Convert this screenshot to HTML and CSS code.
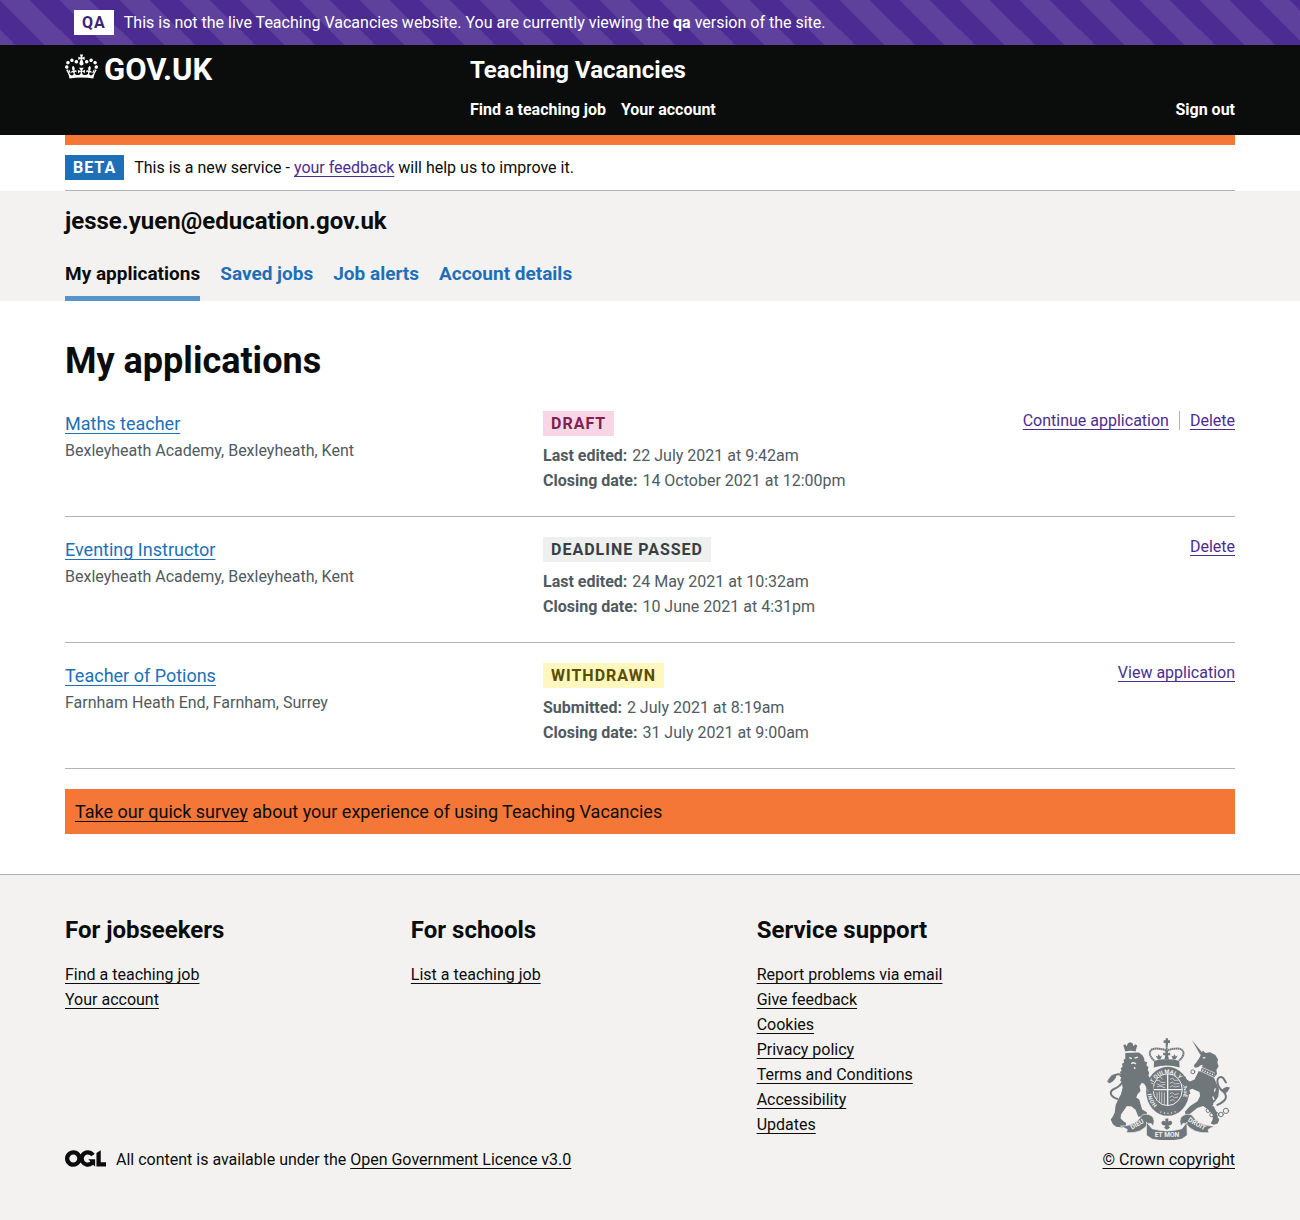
FILE: index.html
```html
<!DOCTYPE html>
<html lang="en">
<head>
<meta charset="utf-8">
<meta name="viewport" content="width=device-width, initial-scale=1">
<title>My applications - Teaching Vacancies - GOV.UK</title>
<link rel="stylesheet" href="styles.css">
</head>
<body>
<div class="env-banner">
  <div class="container env-banner__inner">
    <strong class="tag tag--env">QA</strong>
    <span>This is not the live Teaching Vacancies website. You are currently viewing the <b>qa</b> version of the site.</span>
  </div>
</div>

<header class="header">
  <div class="container header__inner">
    <div class="header__logo">
      <a href="#" class="logo">
        <svg class="logo__crown" viewBox="0 0 132 97" aria-hidden="true"><path fill="currentColor" d="M25 30.2c3.5 1.5 7.7-.2 9.1-3.7 1.5-3.6-.2-7.8-3.9-9.2-3.6-1.4-7.6.3-9.1 3.9-1.4 3.5.3 7.5 3.9 9zM9 39.5c3.6 1.5 7.8-.2 9.2-3.7 1.5-3.6-.2-7.8-3.9-9.1-3.6-1.5-7.6.2-9.1 3.8-1.4 3.5.3 7.5 3.8 9zM4.4 57.2c3.5 1.5 7.7-.2 9.1-3.8 1.5-3.6-.2-7.7-3.9-9.1-3.5-1.5-7.6.3-9.1 3.8-1.4 3.5.3 7.6 3.9 9.1zm38.3-21.4c3.5 1.5 7.7-.2 9.1-3.8 1.5-3.6-.2-7.7-3.9-9.1-3.6-1.5-7.6.3-9.1 3.8-1.3 3.6.4 7.7 3.9 9.1zm64.4-5.6c-3.6 1.5-7.8-.2-9.1-3.7-1.5-3.6.2-7.8 3.8-9.2 3.6-1.4 7.7.3 9.2 3.9 1.3 3.5-.4 7.5-3.9 9zm15.9 9.3c-3.6 1.5-7.7-.2-9.1-3.7-1.5-3.6.2-7.8 3.7-9.1 3.6-1.5 7.7.2 9.2 3.8 1.5 3.5-.3 7.5-3.8 9zm4.7 17.7c-3.6 1.5-7.8-.2-9.2-3.8-1.5-3.6.2-7.7 3.9-9.1 3.6-1.5 7.7.3 9.2 3.8 1.3 3.5-.4 7.6-3.9 9.1zM89.3 35.8c-3.6 1.5-7.8-.2-9.2-3.8-1.4-3.6.2-7.7 3.9-9.1 3.6-1.5 7.7.3 9.2 3.8 1.4 3.6-.3 7.7-3.9 9.1zM69.7 17.7l8.9 4.7V9.3l-8.9 2.8c-.2-.3-.5-.6-.9-.9L72.4 0H59.6l3.5 11.2c-.3.3-.6.5-.9.9l-8.8-2.8v13.1l8.8-4.7c.3.3.6.7.9.9l-5 15.4v.1c-.2.8-.4 1.6-.4 2.4 0 4.1 3.1 7.5 7 8.1h.2c.3 0 .7.1 1 .1.4 0 .7 0 1-.1h.2c4-.6 7.1-4.1 7.1-8.1 0-.8-.1-1.7-.4-2.4V34l-5.1-15.4c.4-.2.7-.6 1-.9zM66 92.8c16.9 0 32.8 1.1 47.1 3.2 4-16.9 8.9-26.7 14-33.5l-9.6-3.4c1 4.9 1.1 7.2 0 10.2-1.5-1.4-3-4.3-4.2-8.7L108.6 76c2.8-2 5-3.2 7.5-3.3-4.4 9.4-10 11.9-13.6 11.2-4.3-.8-6.3-4.6-5.6-7.9 1-4.7 5.7-5.9 8-.5 4.3-8.7-3-11.4-7.6-8.8 7.1-7.2 7.9-13.5 2.1-21.1-8 6.1-8.1 12.3-4.5 20.8-4.7-5.4-12.1-2.5-9.5 6.2 3.4-5.2 7.9-2 7.2 3.1-.6 4.3-6.4 7.8-13.5 7.2-10.3-.9-10.9-8-11.2-13.8 2.5-.5 7.1 1.8 11 7.3L80.2 60c-4.1 4.4-8 5.3-12.3 5.4 1.4-4.4 8-11.6 8-11.6H55.5s6.4 7.2 7.9 11.6c-4.2-.1-8-1-12.3-5.4l1.4 16.4c3.9-5.5 8.5-7.7 10.9-7.3-.3 5.8-.9 12.8-11.1 13.8-7.2.6-12.9-2.9-13.5-7.2-.7-5 3.8-8.3 7.1-3.1 2.7-8.7-4.6-11.6-9.4-6.2 3.7-8.5 3.6-14.7-4.6-20.8-5.8 7.6-5 13.9 2.2 21.1-4.7-2.6-11.9.1-7.7 8.8 2.3-5.5 7.1-4.2 8.1.5.7 3.3-1.3 7.1-5.7 7.9-3.5.7-9-1.8-13.5-11.2 2.5.1 4.7 1.3 7.5 3.3l-4.7-15.4c-1.2 4.4-2.7 7.2-4.3 8.7-1.1-3-.9-5.3 0-10.2l-9.5 3.4c5 6.9 9.9 16.7 14 33.5 14.8-2.1 30.8-3.2 47.7-3.2z"/></svg>
        <span>GOV.UK</span>
      </a>
    </div>
    <div class="header__content">
      <a href="#" class="header__title">Teaching Vacancies</a>
      <nav class="header__nav" aria-label="Main">
        <a href="#">Find a teaching job</a>
        <a href="#">Your account</a>
        <a href="#" class="header__signout">Sign out</a>
      </nav>
    </div>
  </div>
</header>

<div class="container">
  <div class="phase-banner">
    <strong class="tag tag--phase">BETA</strong>
    <span>This is a new service - <a href="#" class="link link--visited">your feedback</a> will help us to improve it.</span>
  </div>
</div>

<div class="account">
  <div class="container">
    <p class="account__email">jesse.yuen@education.gov.uk</p>
    <nav class="tabs" aria-label="Account">
      <a href="#" class="tabs__item tabs__item--current" aria-current="page">My applications</a>
      <a href="#" class="tabs__item">Saved jobs</a>
      <a href="#" class="tabs__item">Job alerts</a>
      <a href="#" class="tabs__item">Account details</a>
    </nav>
  </div>
</div>

<main class="container main">
  <h1 class="main__title">My applications</h1>

  <article class="application">
    <div>
      <a href="#" class="link application__title">Maths teacher</a>
      <p class="application__place">Bexleyheath Academy, Bexleyheath, Kent</p>
    </div>
    <div>
      <strong class="tag tag--pink">DRAFT</strong>
      <dl class="dates">
        <div><dt>Last edited:</dt><dd>22 July 2021 at 9:42am</dd></div>
        <div><dt>Closing date:</dt><dd>14 October 2021 at 12:00pm</dd></div>
      </dl>
    </div>
    <ul class="application__actions">
      <li><a href="#" class="link link--visited">Continue application</a></li>
      <li><a href="#" class="link link--visited">Delete</a></li>
    </ul>
  </article>

  <article class="application">
    <div>
      <a href="#" class="link application__title">Eventing Instructor</a>
      <p class="application__place">Bexleyheath Academy, Bexleyheath, Kent</p>
    </div>
    <div>
      <strong class="tag tag--grey">DEADLINE PASSED</strong>
      <dl class="dates">
        <div><dt>Last edited:</dt><dd>24 May 2021 at 10:32am</dd></div>
        <div><dt>Closing date:</dt><dd>10 June 2021 at 4:31pm</dd></div>
      </dl>
    </div>
    <ul class="application__actions">
      <li><a href="#" class="link link--visited">Delete</a></li>
    </ul>
  </article>

  <article class="application">
    <div>
      <a href="#" class="link application__title">Teacher of Potions</a>
      <p class="application__place">Farnham Heath End, Farnham, Surrey</p>
    </div>
    <div>
      <strong class="tag tag--yellow">WITHDRAWN</strong>
      <dl class="dates">
        <div><dt>Submitted:</dt><dd>2 July 2021 at 8:19am</dd></div>
        <div><dt>Closing date:</dt><dd>31 July 2021 at 9:00am</dd></div>
      </dl>
    </div>
    <ul class="application__actions">
      <li><a href="#" class="link link--visited">View application</a></li>
    </ul>
  </article>

  <p class="survey"><a href="#" class="link link--text">Take our quick survey</a> about your experience of using Teaching Vacancies</p>
</main>

<footer class="footer">
  <div class="container footer__inner">
    <div class="footer__main">
      <div class="footer__columns">
        <section>
          <h2 class="footer__heading">For jobseekers</h2>
          <ul class="footer__list">
            <li><a href="#" class="link link--text">Find a teaching job</a></li>
            <li><a href="#" class="link link--text">Your account</a></li>
          </ul>
        </section>
        <section>
          <h2 class="footer__heading">For schools</h2>
          <ul class="footer__list">
            <li><a href="#" class="link link--text">List a teaching job</a></li>
          </ul>
        </section>
        <section>
          <h2 class="footer__heading">Service support</h2>
          <ul class="footer__list">
            <li><a href="#" class="link link--text">Report problems via email</a></li>
            <li><a href="#" class="link link--text">Give feedback</a></li>
            <li><a href="#" class="link link--text">Cookies</a></li>
            <li><a href="#" class="link link--text">Privacy policy</a></li>
            <li><a href="#" class="link link--text">Terms and Conditions</a></li>
            <li><a href="#" class="link link--text">Accessibility</a></li>
            <li><a href="#" class="link link--text">Updates</a></li>
          </ul>
        </section>
      </div>
      <div class="licence">
        <svg class="licence__logo" viewBox="0 0 483.2 195.7" role="img" aria-label="Open Government Licence"><path fill="currentColor" d="M421.5 142.8V.1l-50.7 32.3v161.1h112.4v-50.7zm-122.3-9.6A47.12 47.12 0 0 1 221 97.8c0-26 21.1-47.1 47.1-47.1 16.7 0 31.4 8.7 39.7 21.8l42.7-27.2A97.63 97.63 0 0 0 268.1 0c-36.5 0-68.3 20.1-85.1 49.7A98 98 0 0 0 97.8 0C43.9 0 0 43.9 0 97.8s43.9 97.8 97.8 97.8c36.5 0 68.3-20.1 85.1-49.7a97.76 97.76 0 0 0 149.6 25.4l19.4 22.2h3v-87.8h-80l24.3 27.5zM97.8 145c-26 0-47.1-21.1-47.1-47.1s21.1-47.1 47.1-47.1 47.1 21.1 47.1 47.1S123.8 145 97.8 145"/></svg>
        <span>All content is available under the <a href="#" class="link link--text">Open Government Licence v3.0</a></span>
      </div>
    </div>
    <div class="crown-copyright">
      <svg class="crest" viewBox="50 38 377 308" aria-hidden="true">
        <!-- imperial crown -->
        <g fill="#6f777b">
          <path d="M230 39h7v6h6v8h-6v8h-7v-8h-6v-8h6z"/>
          <path d="M195 107q38-9 76 0l1 20q-39-12-78 0z"/>
          <path d="M207 103l-8-12 7 3 3-8 4 8 6-3-5 12zM226 103l3-12-7-2 1-7 6 2 4-8 4 8 6-2 1 7-7 2 3 12zM252 103l-5-12 6 3 4-8 3 8 7-3-8 12z"/>
        </g>
        <g fill="none" stroke="#6f777b" stroke-width="6" stroke-dasharray="5 1">
          <path d="M195 106C175 88 180 70 200 70c17 0 33 3 33 12 0-9 16-12 33-12 20 0 25 18 5 36"/>
          <path d="M233 60v24"/>
        </g>
        <!-- garter and quartered shield -->
        <ellipse cx="236" cy="199" rx="65" ry="74" fill="#6f777b"/>
        <ellipse cx="236" cy="194" rx="44" ry="48" fill="none" stroke="#f3f2f1" stroke-width="3"/>
        <g fill="none" stroke="#f3f2f1" stroke-width="2">
          <path d="M236 147v94M193 194h86" stroke-width="4"/>
          <path d="M202 166h9l4 6h14M203 176l10 5 16-3M204 186l8-3 16 5M214 156l7 7M243 163l8-4 5 7 14-1M242 175l9-4 7 6 14-2M243 186l8-4 8 4 13-3M243 206l8-3 6 6 13-3M242 217l8-4 7 6 10-3M243 228l9-4 5 4M204 202v20M211 200v30M218 200v35M226 202v35"/>
          <path d="M214 261q24 10 46-1" stroke-dasharray="3 8" stroke-width="4"/>
        </g>
        <path id="garter" d="M205 241A49 54 0 1 1 267 241" fill="none"/>
        <text class="crest__garter"><textPath href="#garter">HONI SOIT QUI MAL Y PENSE</textPath></text>
        <!-- lion -->
        <g fill="#6f777b">
          <path d="M108 79l-6-19 6-3 4 6 4-9 7-3 7 3 3 9 5-6 6 4-5 18q-15-5-31 0z"/>
          <path d="M108 83l41-1 11 8 5 9 1 9 8 3-2 9 6 6-2 9 4 7-2 9 5 9 2 12 8 12 1 14-6 6-9-4-8-14-6-10-7-3-7 11 3 14-9 10-4 10 9 6 5 16 4 14 14 8 1 10-4 5-23-2-8-20-12-10-14-2-8 12-10 14-1 12 9 9 7 4 0 9-10 5-20-2-10-8-6-14 6-8 6-12 3-24 8-18 8-14 5-20-3-18-5-4 4-9-5-3 5-6-5-7 6-4-3-8 6-4-2-9 6-3-1-9 5-3z"/>
        </g>
        <g fill="none" stroke="#6f777b" stroke-linecap="round">
          <path d="M84 222C62 214 58 200 74 192c28-12 34-34 22-42-12-6-22 0-20 8" stroke-width="6"/>
          <path d="M80 148c-14 0-18 8-26 22 4-2 5 0 4 4 8-2 20-8 22-26z" fill="#6f777b" stroke-width="2"/>
        </g>
        <!-- unicorn -->
        <g fill="#6f777b">
          <path d="M309 44l33 40-7 5z"/>
          <path d="M337 88l5-12 8 7 14-2 16 8 8 14-2 10 4 10-7 12 2 12-9 10-42-16 4-10 4-12-8 2-6 5-10 2-3-8 8-9 8-12z"/>
          <path d="M330 138l46 20 7 17 8 18-2 22-9 13-7 8 5 15 7 12 1 13 6 8-5 12-12 4-9-4 6-12 0-14-14-16-15-11-18 6-14 12-9 7 0 8-11-3-3-12 16-18 22-14 8-16-2-12-22-10-9 4 4 12-8 1-7-15 6-9-14-4-8-14 4-9 12-3 3 10 10 5 14-6z"/>
          <path d="M396 196c9-3 12-14 29-8-6 4-6 16-18 17z"/>
        </g>
        <g fill="none" stroke="#6f777b" stroke-linecap="round">
          <path d="M386 240c22-10 34-22 20-38-24-18-26-47-8-46 10 2 8 10 14 16" stroke-width="6"/>
          <g stroke-width="3"><circle cx="358" cy="257" r="6"/><circle cx="369" cy="270" r="6"/><circle cx="384" cy="269" r="6"/><circle cx="397" cy="269" r="7"/><circle cx="412" cy="258" r="8"/><circle cx="312" cy="140" r="6"/><circle cx="293" cy="170" r="5"/></g>
        </g>
        <g fill="none" stroke="#f3f2f1">
          <path d="M330 135l45 21M334 124l45 20" stroke-width="2"/>
          <path d="M333 131l45 20" stroke-width="4" stroke-dasharray="4 4"/>
          <path d="M342 98l8-1M120 97l8 3M136 99l10-3M126 116q8-7 14 1M135 126l3 5" stroke-width="4"/>
          <path d="M380 190l-3 10M372 215l4 10M378 238l-6 6" stroke-width="4"/>
        </g>
        <!-- motto ribbon -->
        <g fill="#6f777b" stroke="#f3f2f1" stroke-width="2">
          <path d="M94 304q42 2 66-34 20-6 32 8 6 10 0 26l-6-8-8 0q-22 32-66 28l2-10z"/>
          <path d="M378 304q-46 2-70-34-20-6-32 8-6 10 0 26l6-8 8 0q24 32 70 28l-2-10z"/>
          <path d="M172 292l17 20q45 13 90 0l15-20 1 40-16 11q-45 11-90 0l-17-11z"/>
        </g>
        <path d="M229 281h9v10q8-7 12 2-2 10-12 9l5 7-9 6-9-6 5-7q-13 1-13-9 5-9 12-2z" fill="#6f777b"/>
        <text class="crest__motto" text-anchor="middle" transform="translate(147 304) rotate(-30)">DIEU</text>
        <text class="crest__motto" text-anchor="middle" x="234" y="338">ET MON</text>
        <text class="crest__motto" text-anchor="middle" transform="translate(321 303) rotate(30)">DROIT</text>
      </svg>
      <a href="#" class="link link--text">© Crown copyright</a>
    </div>
  </div>
</footer>
</body>
</html>
```
FILE: styles.css
```css
* {
  box-sizing: border-box;
}

body {
  margin: 0;
  background: #fff;
  color: #0b0c0c;
  font-family: Roboto, Arial, sans-serif;
  font-size: 16px;
  line-height: 25px;
}

p, h1, h2, ul, dl, dd {
  margin: 0;
  padding: 0;
}

ul {
  list-style: none;
}

h1, h2, b, dt,
.tag,
.header,
.tabs,
.account__email {
  font-weight: 700;
}

.container {
  max-width: 1170px;
  margin: 0 auto;
}

.link {
  color: #1d70b8;
  text-decoration-thickness: 1px;
  text-underline-offset: 3px;
  text-decoration-skip-ink: none;
}

.link--visited {
  color: #4c2c92;
}

.link--text {
  color: #0b0c0c;
}

.tag {
  display: inline-block;
  padding: 0 8px;
  line-height: 25px;
  letter-spacing: 1px;
}

.tag--env {
  background: #fff;
  color: #3d2375;
}

.tag--phase {
  background: #1d70b8;
  color: #fff;
}

.tag--pink {
  background: #f7d7e6;
  color: #80224d;
}

.tag--grey {
  background: #eeefef;
  color: #383f43;
}

.tag--yellow {
  background: #fff7bf;
  color: #594d00;
}

/* Environment banner */

.env-banner {
  background-color: #4c2c92;
  background-image: linear-gradient(45deg, #5e419d 25%, #4c2c92 25%, #4c2c92 50%, #5e419d 50%, #5e419d 75%, #4c2c92 75%);
  background-size: 60px 60px;
  color: #fff;
}

.env-banner__inner {
  display: flex;
  gap: 10px;
  padding: 10px 9px;
}

/* Header */

.header {
  background: #0b0c0c;
}

.header__inner {
  display: flex;
}

.header a {
  color: #fff;
  text-decoration: none;
}

.header__logo {
  flex: 0 0 calc(100% / 3);
  padding-top: 8px;
}

.logo {
  display: inline-flex;
  gap: 6px;
  font-size: 31px;
  line-height: 34px;
}

.logo__crown {
  width: 33px;
  height: 25px;
  margin-top: 1px;
}

.header__content {
  flex: 1;
  padding: 10px 0 13px 15px;
}

.header__title {
  display: block;
  font-size: 24px;
  line-height: 30px;
}

.header__nav {
  display: flex;
  gap: 15px;
  padding-top: 12px;
}

.header__signout {
  margin-left: auto;
}

/* Phase banner */

.phase-banner {
  display: flex;
  gap: 10px;
  padding: 10px 0;
  border-top: 10px solid #f47738;
  border-bottom: 1px solid #b1b4b6;
}

/* Account band */

.account {
  background: #f3f2f1;
}

.account__email {
  padding-top: 15px;
  font-size: 24px;
  line-height: 30px;
}

.tabs {
  display: flex;
  gap: 20px;
  padding-top: 25px;
}

.tabs__item {
  padding-bottom: 10px;
  border-bottom: 5px solid transparent;
  color: #1d70b8;
  font-size: 19px;
  text-decoration: none;
}

.tabs__item--current {
  border-color: #5694ca;
  color: #0b0c0c;
}

/* Applications */

.main {
  padding: 40px 0;
}

.main__title {
  margin-bottom: 10px;
  font-size: 36px;
  line-height: 40px;
}

.application {
  display: grid;
  grid-template-columns: 478fr 358fr 334fr;
  padding: 20px 0;
  border-bottom: 1px solid #b1b4b6;
}

.application__title {
  font-size: 18px;
}

.application__place {
  padding-top: 1px;
  color: #505a5f;
}

.dates {
  padding: 7px 0 3px;
  color: #505a5f;
}

.dates div {
  display: flex;
  gap: 5px;
}

.application__actions {
  display: flex;
  justify-content: flex-end;
  align-items: flex-start;
  line-height: 19px;
}

.application__actions li + li {
  margin-left: 10px;
  padding-left: 10px;
  border-left: 1px solid #b1b4b6;
}

.survey {
  margin-top: 20px;
  padding: 10px;
  background: #f47738;
  font-size: 18px;
}

/* Footer */

.footer {
  padding: 40px 0 48px;
  border-top: 1px solid #b1b4b6;
  background: #f3f2f1;
}

.footer__inner {
  display: flex;
  align-items: flex-end;
}

.footer__main {
  flex: 1;
}

.footer__columns {
  display: grid;
  grid-template-columns: repeat(3, 1fr);
}

.footer__heading {
  margin-bottom: 17px;
  font-size: 24px;
  line-height: 30px;
}

.licence {
  display: flex;
  gap: 10px;
  padding-top: 10px;
}

.licence__logo {
  width: 41px;
  height: 17px;
  margin-top: 3px;
}

.crown-copyright {
  text-align: right;
}

.crest {
  display: block;
  width: 125px;
  height: 102px;
  margin: 0 auto 7px;
}

.crest__garter,
.crest__motto {
  fill: #f3f2f1;
  font-weight: 700;
}

.crest__garter {
  font-size: 17px;
}

.crest__motto {
  font-size: 20px;
}
```
